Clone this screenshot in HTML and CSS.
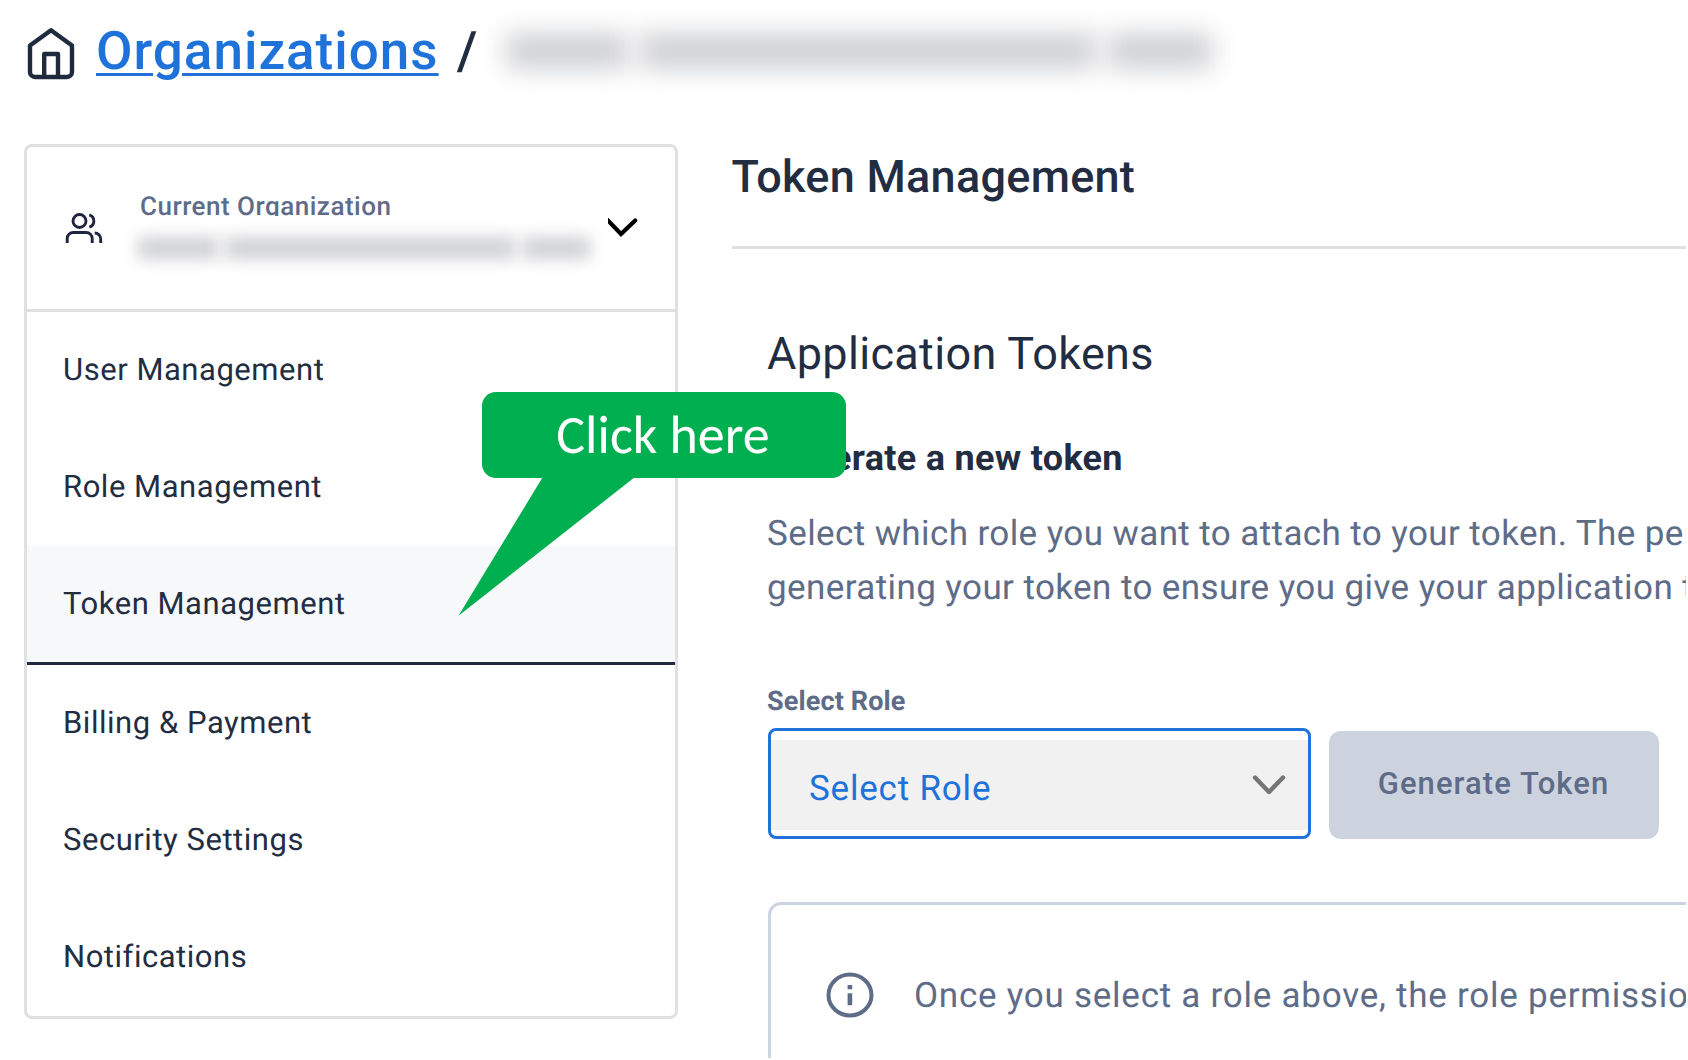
FILE: index.html
```
<!DOCTYPE html>
<html lang="en">
<head>
<meta charset="utf-8">
<title>Token Management</title>
<link rel="stylesheet" href="styles.css">
</head>
<body>
<div class="page">
  <header class="breadcrumb">
    <svg class="home-icon" width="48" height="54" viewBox="0 0 48 54" fill="none" stroke="#1f2a3f" stroke-width="4.4" stroke-linejoin="round">
      <path d="M24 4.200 45 19.500V46a5 5 0 0 1-5 5H8a5 5 0 0 1-5-5V19.500Z"/>
      <path d="M17.200 51V28H31V51"/>
    </svg>
    <a class="breadcrumb-link" href="#">Organizations</a>
    <span class="slash">/</span>
    <div class="redacted redacted-lg"><i class="r1"></i><i class="r2"></i><i class="r3"></i></div>
  </header>

  <div class="columns">
    <aside class="sidebar">
      <div class="org">
        <svg class="users-icon" width="38" height="34" viewBox="0 0 38 34" fill="none" stroke="#1f2540" stroke-width="2.9">
          <circle cx="14.500" cy="10" r="6.500"/>
          <path d="M2.200 32v-4.500a6 6 0 0 1 6-6h13a6 6 0 0 1 6 6V32"/>
          <path d="M24.300 3.800a6.500 6.500 0 0 1 0 12.400"/>
          <path d="M29.700 22a6 6 0 0 1 6 6V32"/>
        </svg>
        <div class="org-text">
          <div class="org-label">Current Organization</div>
          <div class="redacted redacted-sm"><i class="r1"></i><i class="r2"></i><i class="r3"></i></div>
        </div>
        <svg class="org-chevron" width="30" height="20" viewBox="0 0 30 20" fill="none" stroke="#000" stroke-width="4.200" stroke-linecap="round">
          <path d="M-1 1.500 13 16 27.200 2.500"/>
        </svg>
      </div>
      <nav class="menu">
        <a class="item">User Management</a>
        <a class="item">Role Management</a>
        <a class="item active">Token Management</a>
        <a class="item">Billing &amp; Payment</a>
        <a class="item">Security Settings</a>
        <a class="item">Notifications</a>
      </nav>
    </aside>

    <main class="main">
      <h1 class="title">Token Management</h1>
      <section class="section">
        <h2 class="subtitle">Application Tokens</h2>
        <h3 class="heading">Generate a new token</h3>
        <p class="description">Select which role you want to attach to your token. The permissions<br>generating your token to ensure you give your application the</p>
        <div class="field-label">Select Role</div>
        <div class="form-row">
          <div class="select">
            <div class="select-inner">
              <span>Select Role</span>
              <svg width="34" height="22" viewBox="0 0 34 22" fill="none" stroke="#757575" stroke-width="4.400" stroke-linecap="round" stroke-linejoin="round">
                <path d="M3 3.500 17 18 31 3.500"/>
              </svg>
            </div>
          </div>
          <button class="generate">Generate Token</button>
        </div>
        <div class="info">
          <svg width="48" height="48" viewBox="0 0 48 48">
            <ellipse cx="24" cy="24" rx="21.500" ry="20.500" fill="none" stroke="#5e6c88" stroke-width="4"/>
            <path fill="#5e6c88" d="M21.600 14h4.600v4.200h-4.600zM21.600 22.300h4.600v12h-4.600z"/>
          </svg>
          <span>Once you select a role above, the role permissions</span>
        </div>
      </section>
    </main>
  </div>

  <div class="callout">
    <div class="callout-box">Click here</div>
    <svg class="callout-tail" width="176" height="140" viewBox="0 0 176 140"><path fill="#00b050" d="M84.800 0H177L.5 138.700Z"/></svg>
  </div>
</div>
</body>
</html>
```
FILE: styles.css
```
* { box-sizing: border-box; }

body {
  margin: 0;
  background: #fff;
  font-family: Roboto, "Liberation Sans", sans-serif;
  color: #232d42;
  text-rendering: geometricPrecision;
  overflow: hidden;
}

.page {
  position: relative;
  width: 1686px;
  height: 1058px;
  overflow: hidden;
}

/* Breadcrumb */
.breadcrumb {
  display: flex;
  align-items: center;
  height: 102px;
  padding-left: 27px;
  font-size: 53px;
  font-weight: 500;
  line-height: 102px;
  white-space: nowrap;
}
.home-icon { margin: 4px 21px 0 0; }
.breadcrumb-link {
  color: #1f72d9;
  letter-spacing: 1px;
  text-decoration: underline;
  text-decoration-thickness: 3px;
  text-underline-offset: 4px;
}
.slash { margin-left: 18px; }

/* Obscured account names */
.redacted { display: flex; }
.redacted i { display: block; flex: none; background: #cfd0d3; }
.redacted-lg { gap: 12px; margin-left: 29px; }
.redacted-lg i { height: 36px; filter: blur(13px); }
.redacted-lg .r1 { width: 122px; }
.redacted-lg .r2 { width: 456px; }
.redacted-lg .r3 { width: 104px; }
.redacted-sm { gap: 7px; margin: 21px 0 0 -2px; }
.redacted-sm i { height: 22px; filter: blur(8px); }
.redacted-sm .r1 { width: 80px; }
.redacted-sm .r2 { width: 290px; }
.redacted-sm .r3 { width: 68px; }

.columns {
  display: flex;
  align-items: flex-start;
  gap: 54px;
  margin-top: 42px;
  padding-left: 24px;
}

/* Sidebar */
.sidebar {
  flex: none;
  width: 654px;
  height: 875px;
  border: 3px solid #e0e0e0;
  border-radius: 8px;
}
.org {
  display: flex;
  height: 165px;
  border-bottom: 3px solid #e0e0e0;
  padding-left: 38px;
}
.users-icon { margin-top: 64px; }
.org-text { width: 468px; padding: 47px 0 0 37px; }
.org-label {
  height: 22px;
  overflow: hidden;
  color: #5e6c88;
  font-size: 26px;
  font-weight: 500;
  line-height: 27px;
  letter-spacing: 0.500px;
}
.org-chevron { margin: 71px 0 0 37px; }

.item {
  display: block;
  height: 117px;
  padding-left: 36px;
  font-size: 31px;
  line-height: 116px;
  letter-spacing: 0.53px;
}
.item.active {
  height: 119px;
  background: #f6f8fa;
  border-bottom: 3px solid #1f2a3f;
}

/* Main column */
.main { flex: 1; min-width: 0; }
.title {
  margin: 0;
  padding-bottom: 36px;
  border-bottom: 3px solid #e0e0e0;
  font-size: 45px;
  font-weight: 500;
  line-height: 66px;
  letter-spacing: 0.28px;
  text-indent: -0.5px;
}
.section { padding: 75px 0 0 35px; white-space: nowrap; }
.subtitle {
  margin: 0;
  font-size: 45px;
  font-weight: 400;
  line-height: 60px;
  letter-spacing: 0.33px;
}
.heading {
  margin: 50px 0 0;
  font-size: 36px;
  font-weight: 700;
  line-height: 48px;
  letter-spacing: 0.3px;
}
.description {
  margin: 25px 0 0;
  color: #5e6c88;
  font-size: 35px;
  line-height: 53.500px;
  letter-spacing: 0.4px;
}
.field-label {
  margin-top: 69px;
  color: #5e6c88;
  font-size: 27px;
  font-weight: 700;
  line-height: 36px;
  letter-spacing: 0.13px;
}
.form-row { display: flex; gap: 18px; margin: 9px 0 0 1px; }
.select {
  width: 543px;
  height: 111px;
  padding-top: 9px;
  border: 3px solid #1f72d9;
  border-radius: 8px;
}
.select-inner {
  display: flex;
  align-items: center;
  justify-content: space-between;
  height: 90px;
  padding: 0 22px 0 38px;
  background: #f1f1f1;
  color: #1f72d9;
  font-size: 35px;
  letter-spacing: 0.8px;
}
.select-inner span { padding-top: 7px; }
.generate {
  width: 330px;
  height: 108px;
  margin-top: 3px;
  padding: 0 1px 4px 0;
  border: 0;
  border-radius: 12px;
  background: #ccd3df;
  color: #5e6c88;
  font: 500 31px Roboto, "Liberation Sans", sans-serif;
  letter-spacing: 1.060px;
}
.info {
  display: flex;
  align-items: center;
  gap: 40px;
  width: 1000px;
  height: 240px;
  margin: 63px 0 0 1px;
  padding: 0 0 54px 55px;
  border: 3px solid #cdd4e1;
  border-radius: 13px;
  color: #5e6c88;
  font-size: 35px;
  letter-spacing: 0.75px;
}

/* Callout laid over the page */
.callout { position: absolute; left: 458px; top: 392px; }
.callout-box {
  width: 364px;
  height: 86px;
  margin-left: 24px;
  padding-right: 2px;
  border-radius: 14px;
  background: #00b050;
  color: #fff;
  font-family: Carlito, "Open Sans", sans-serif;
  font-size: 54px;
  line-height: 87px;
  text-align: center;
}
.callout-tail { display: block; margin-top: -1px; }
```
